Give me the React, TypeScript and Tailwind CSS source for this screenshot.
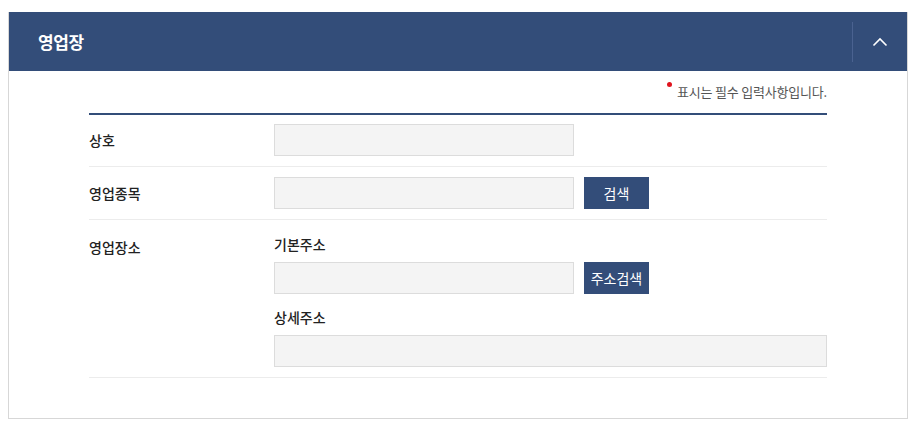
import React from "react";

const font = { fontFamily: '"Noto Sans CJK KR", "Noto Sans", sans-serif' };

const Field: React.FC<{ wide?: boolean }> = ({ wide }) => (
    <input
        type="text"
        readOnly
        className={
            wide
                ? "h-8 w-[553px] border border-[#dcdcdc] bg-[#f4f4f4] outline-none"
                : "h-8 w-[300px] border border-[#dcdcdc] bg-[#f4f4f4] outline-none"
        }
    />
);

const Btn: React.FC<{ label: string }> = ({ label }) => (
    <button className="ml-[10px] h-8 w-[65px] bg-[#334d79] text-[14px] text-white">{label}</button>
);

export default function App() {
    return (
        <div className="bg-white pt-3 px-2" style={font}>
            <div className="w-[900px] border border-[#d7d7d7] border-t-0">
                <div className="flex h-[59px] items-center bg-[#334d79]">
                    <h2 className="flex-1 pl-[29px] text-[17px] font-bold tracking-tight text-white">영업장</h2>
                    <div className="flex h-10 w-[55px] items-center justify-center border-l border-[#4a6290]">
                        <svg width="16" height="10" viewBox="0 0 16 10" fill="none">
                            <path d="M1.5 8.5L8 2l6.5 6.5" stroke="white" strokeWidth="1.6"/>
                        </svg>
                    </div>
                </div>
                <div className="px-[80px] pb-10">
                    <p className="flex justify-end pt-[11px] pb-[12px] text-[13px] leading-[19px] text-[#555]">
                        <span className="mr-[5px] h-[5px] w-[5px] rounded-full bg-[#e0141e]"/>
                        <span className="tracking-[-0.2px]">표시는 필수 입력사항입니다.</span>
                    </p>
                    <div className="border-t-2 border-[#334d79]">
                        <div className="flex items-center border-b border-[#ececec] pt-[9px] pb-[10px]">
                            <span className="w-[185px] text-[14px] font-medium text-[#222]">상호</span>
                            <Field/>
                        </div>
                        <div className="flex items-center border-b border-[#ececec] pt-[10px] pb-[10px]">
                            <span className="w-[185px] text-[14px] font-medium text-[#222]">영업종목</span>
                            <Field/>
                            <Btn label="검색"/>
                        </div>
                        <div className="flex border-b border-[#ececec] pt-[14px] pb-[10px]">
                            <span className="w-[185px] pt-[3px] text-[14px] font-medium text-[#222]">영업장소</span>
                            <div className="flex flex-col">
                                <span className="text-[14px] font-medium leading-5 text-[#222]">기본주소</span>
                                <div className="mt-[8px] flex">
                                    <Field/>
                                    <Btn label="주소검색"/>
                                </div>
                                <span className="mt-[13px] text-[14px] font-medium leading-5 text-[#222]">상세주소</span>
                                <div className="mt-[8px]">
                                    <Field wide/>
                                </div>
                            </div>
                        </div>
                    </div>
                </div>
            </div>
        </div>
    );
}
